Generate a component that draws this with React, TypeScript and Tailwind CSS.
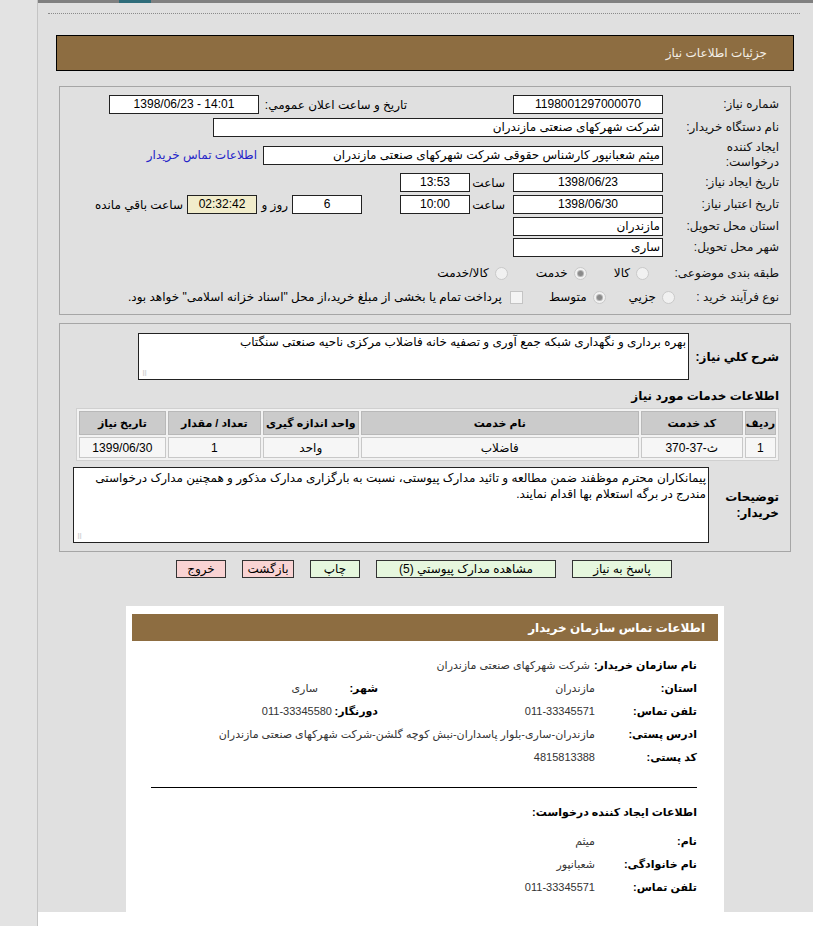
import React from "react";

const font = { fontFamily: "'Liberation Sans', 'DejaVu Sans', sans-serif" };

function Box({ w, children, center = true, className = "", dir }: { w: string; children?: React.ReactNode; center?: boolean; className?: string; dir?: "ltr" | "rtl" }) {
  return (
    <div
      dir={dir}
      className={`${w} h-[19px] border border-[#222] bg-white px-[2px] text-[12px] leading-[17px] text-black whitespace-nowrap overflow-hidden ${center ? "text-center" : "text-right"} ${className}`}
    >
      {children}
    </div>
  );
}

function Radio({ checked = false }: { checked?: boolean }) {
  return (
    <span className="inline-flex h-[13px] w-[13px] items-center justify-center rounded-full border border-[#c9c9c9] bg-[#f1f1f1]">
      {checked && <span className="h-[5px] w-[5px] rounded-full bg-[#8a8a8a] ring-1 ring-[#b5b5b5]" />}
    </span>
  );
}

function Label({ children }: { children: React.ReactNode }) {
  return <div className="w-[106px] shrink-0 text-[12px] leading-[15px] text-[#111]">{children}</div>;
}

function Grip() {
  return <span className="absolute bottom-[2px] left-[3px] text-[7px] leading-[7px] text-[#aaa]">⠿</span>;
}

function InfoRow({ label, value, label2, value2, v2 = "" }: { label: string; value: string; label2?: string; value2?: string; v2?: string }) {
  return (
    <div className="flex h-[23px] items-center">
      <div className="min-w-[102px] shrink-0 whitespace-nowrap pl-[4px] text-[11px] font-bold text-black">{label}</div>
      <div className="w-[217px] shrink-0 text-[11px] text-[#333] whitespace-nowrap">{value}</div>
      {label2 && <div className="w-[46px] shrink-0 whitespace-nowrap text-[11px] font-bold text-black">{label2}</div>}
      {value2 && <div className={`text-[11px] text-[#333] ${v2}`}>{value2}</div>}
    </div>
  );
}

export default function App() {
  return (
    <div dir="ltr" className="flex h-[926px] w-[813px] overflow-hidden bg-white" style={font}>
      <div className="w-[38px] shrink-0 border-r border-[#c4c4c4] bg-[#e3e3e3]" />
      <div className="flex flex-1 flex-col">
        <div className="relative h-[3px] bg-[#808080]">
          <div className="absolute left-[81px] top-0 h-[3px] w-[32px] bg-[#2f6c7a]" />
        </div>
        <div dir="rtl" className="flex h-[909px] flex-col bg-[#e0e0e0]">
          <div className="mr-[13px] ml-[10px] mt-[10px] border-t border-dotted border-[#8a8a8a]" />

          {/* header */}
          <div className="mr-[19px] ml-[18px] mt-[21px] flex h-[36px] items-center border border-black bg-[#8d6d41] pr-[26px]">
            <span className="text-[12px] text-[#f4efe6]">جزئیات اطلاعات نیاز</span>
          </div>

          {/* panel 1 */}
          <div className="mr-[22px] ml-[21px] mt-[15px] flex h-[229px] flex-col border border-[#a6a6a6] pr-[11px] pt-[8px]">
            <div className="flex h-[19px] items-center">
              <Label>شماره نیاز:</Label>
              <Box w="w-[150px] mr-[10px]">1198001297000070</Box>
              <div className="mr-[106px] w-[143px] text-[12px]">تاریخ و ساعت اعلان عمومي:</div>
              <Box w="w-[150px] mr-[5px]" dir="ltr">1398/06/23 - 14:01</Box>
            </div>
            <div className="mt-[4px] flex h-[19px] items-center">
              <Label>نام دستگاه خریدار:</Label>
              <Box w="w-[450px] mr-[10px]" center={false}>شرکت شهرکهای صنعتی مازندران</Box>
            </div>
            <div className="mt-[4px] flex h-[28px] items-center">
              <Label>ایجاد کننده درخواست:</Label>
              <Box w="w-[400px] mr-[10px]" center={false}>میثم شعبانپور کارشناس حقوقی شرکت شهرکهای صنعتی مازندران</Box>
              <a className="mr-[6px] text-[12px] text-[#2424c8]">اطلاعات تماس خریدار</a>
            </div>
            <div className="mt-[4px] flex h-[19px] items-center">
              <Label>تاریخ ایجاد نیاز:</Label>
              <Box w="w-[150px] mr-[10px]">1398/06/23</Box>
              <div className="w-[43px] pr-[8px] text-[12px]">ساعت</div>
              <Box w="w-[70px]">13:53</Box>
            </div>
            <div className="mt-[3px] flex h-[19px] items-center">
              <Label>تاریخ اعتبار نیاز:</Label>
              <Box w="w-[150px] mr-[10px]">1398/06/30</Box>
              <div className="w-[43px] pr-[8px] text-[12px]">ساعت</div>
              <Box w="w-[70px]">10:00</Box>
              <Box w="w-[70px] mr-[38px]">6</Box>
              <div className="w-[35px] pr-[4px] text-[12px]">روز و</div>
              <Box w="w-[70px]" className="!bg-[#f1eccb]">02:32:42</Box>
              <div className="mr-[4px] text-[12px]">ساعت باقي مانده</div>
            </div>
            <div className="mt-[3px] flex h-[19px] items-center">
              <Label>استان محل تحویل:</Label>
              <Box w="w-[150px] mr-[10px]" center={false}>مازندران</Box>
            </div>
            <div className="mt-[2px] flex h-[19px] items-center">
              <Label>شهر محل تحویل:</Label>
              <Box w="w-[150px] mr-[10px]" center={false}>ساری</Box>
            </div>
            <div className="mt-[6px] flex h-[20px] items-center text-[12px]">
              <Label>طبقه بندی موضوعی:</Label>
              <div className="mr-[24px] flex items-center gap-[6px]"><Radio /><span>کالا</span></div>
              <div className="mr-[27px] flex items-center gap-[6px]"><Radio checked /><span>خدمت</span></div>
              <div className="mr-[28px] flex items-center gap-[6px]"><Radio /><span>کالا/خدمت</span></div>
            </div>
            <div className="mt-[4px] flex h-[20px] items-center text-[12px]">
              <Label>نوع فرآیند خرید :</Label>
              <div className="mr-[-2px] flex items-center gap-[6px]"><Radio /><span>جزیي</span></div>
              <div className="mr-[23px] flex items-center gap-[6px]"><Radio checked /><span>متوسط</span></div>
              <div className="mr-[26px] flex items-center gap-[8px]">
                <span className="h-[13px] w-[13px] border border-[#c4c4c4] bg-[#f4f4f4]" />
                <span>پرداخت تمام یا بخشی از مبلغ خرید،از محل "اسناد خزانه اسلامی" خواهد بود.</span>
              </div>
            </div>
          </div>

          {/* panel 2 */}
          <div className="mr-[22px] ml-[21px] mt-[8px] flex h-[229px] flex-col border border-[#a6a6a6] pr-[11px] pt-[9px]">
            <div className="flex items-center">
              <div className="w-[90px] shrink-0 whitespace-nowrap text-[12px] font-bold">شرح کلي نیاز:</div>
              <div className="relative h-[47px] w-[551px] border border-[#222] bg-white px-[2px] text-[12px] leading-[16px]">
                بهره برداری و نگهداری شبکه جمع آوری و تصفیه خانه فاضلاب مرکزی ناحیه صنعتی سنگتاب
                <Grip />
              </div>
            </div>
            <div className="mt-[8px] text-[12px] font-bold leading-[16px]">اطلاعات خدمات مورد نیاز</div>
            <table className="mt-[4px] ml-[2px] w-[703px] border-separate border-spacing-[2px] border border-[#d0d0d0] bg-[#f2f2f2] text-[11px]">
              <thead>
                <tr className="h-[24px] bg-[#cbcbcb]">
                  <th className="w-[22px] whitespace-nowrap border border-[#b8b8b8] font-bold">ردیف</th>
                  <th className="w-[102px] whitespace-nowrap border border-[#b8b8b8] font-bold">کد خدمت</th>
                  <th className="w-[278px] whitespace-nowrap border border-[#b8b8b8] font-bold">نام خدمت</th>
                  <th className="w-[96px] whitespace-nowrap border border-[#b8b8b8] font-bold">واحد اندازه گیری</th>
                  <th className="w-[93px] whitespace-nowrap border border-[#b8b8b8] font-bold">تعداد / مقدار</th>
                  <th className="whitespace-nowrap border border-[#b8b8b8] font-bold">تاریخ نیاز</th>
                </tr>
              </thead>
              <tbody>
                <tr className="h-[21px] bg-[#f6f6f6] text-center text-[12px]">
                  <td className="border border-[#c8c8c8]">1</td>
                  <td className="border border-[#c8c8c8]">ث-37-370</td>
                  <td className="border border-[#c8c8c8]">فاضلاب</td>
                  <td className="border border-[#c8c8c8]">واحد</td>
                  <td className="border border-[#c8c8c8]">1</td>
                  <td className="border border-[#c8c8c8]">1399/06/30</td>
                </tr>
              </tbody>
            </table>
            <div className="mt-[6px] flex items-center">
              <div className="w-[70px] shrink-0 pl-[14px] text-[12px] font-bold leading-[16px]">توضیحات خریدار:</div>
              <div className="relative h-[76px] w-[636px] border border-[#222] bg-white px-[2px] pt-[2px] text-[12px] leading-[16px]">
                پیمانکاران محترم موظفند ضمن مطالعه و تائید مدارک پیوستی، نسبت به بارگزاری مدارک مذکور و همچنین مدارک درخواستی مندرج در برگه استعلام بها اقدام نمایند.
                <Grip />
              </div>
            </div>
          </div>

          {/* buttons */}
          <div className="mt-[8px] flex justify-center gap-[16px] pr-[3px] text-[12px]">
            <button className="h-[18px] w-[100px] border border-[#333] bg-[#e6f7de] leading-[16px]">پاسخ به نیاز</button>
            <button className="h-[18px] w-[180px] border border-[#333] bg-[#e6f7de] leading-[16px]">مشاهده مدارک پیوستي (5)</button>
            <button className="h-[18px] w-[50px] border border-[#333] bg-[#e6f7de] leading-[16px]">چاپ</button>
            <button className="h-[18px] w-[52px] border border-[#333] bg-[#f9d3d3] leading-[16px]">بازگشت</button>
            <button className="h-[18px] w-[50px] border border-[#333] bg-[#f9d3d3] leading-[16px]">خروج</button>
          </div>

          {/* contact card */}
          <div className="mr-[89px] ml-[88px] mt-[28px] flex flex-1 flex-col bg-white px-[6px] pt-[8px]">
            <div className="flex h-[27px] items-center bg-[#8d6d41] pr-[13px] text-[12px] font-bold text-white">
              اطلاعات تماس سازمان خریدار
            </div>
            <div className="pr-[21px] pt-[13px]">
              <InfoRow label="نام سازمان خریدار:" value="شرکت شهرکهای صنعتی مازندران" />
              <InfoRow label="استان:" value="مازندران" label2="شهر:" value2="ساری" v2="mr-[14px]" />
              <InfoRow label="تلفن تماس:" value="011-33345571" label2="دورنگار:" value2="011-33345580" />
              <div className="flex h-[23px] items-center">
                <div className="w-[102px] shrink-0 text-[11px] font-bold">ادرس پستی:</div>
                <div className="text-[11px] text-[#333] whitespace-nowrap">مازندران-ساری-بلوار پاسداران-نبش کوچه گلشن-شرکت شهرکهای صنعتی مازندران</div>
              </div>
              <InfoRow label="کد پستی:" value="4815813388" />
              <div className="ml-[19px] mt-[18px] border-t border-black" />
              <div className="mt-[16px] text-[11px] font-bold">اطلاعات ایجاد کننده درخواست:</div>
              <div className="mt-[9px]">
                <InfoRow label="نام:" value="میثم" />
                <InfoRow label="نام خانوادگی:" value="شعبانپور" />
                <InfoRow label="تلفن تماس:" value="011-33345571" />
              </div>
            </div>
          </div>
        </div>
      </div>
    </div>
  );
}
